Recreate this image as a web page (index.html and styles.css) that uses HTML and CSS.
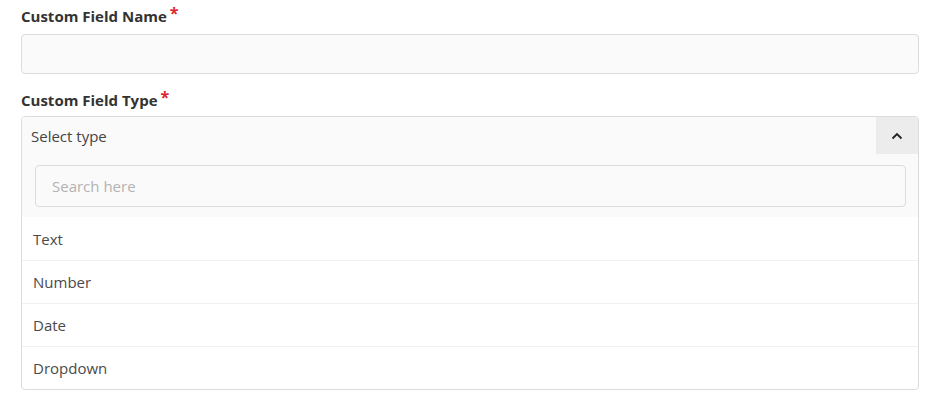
FILE: index.html
```html
<!DOCTYPE html>
<html>
<head>
<meta charset="utf-8">
<link rel="stylesheet" href="styles.css">
</head>
<body>
<div class="form">
  <div class="field">
    <label class="field-label">Custom Field Name<span class="req">*</span></label>
    <input class="text-input" type="text">
  </div>
  <div class="field field-second">
    <label class="field-label">Custom Field Type<span class="req">*</span></label>
    <div class="select">
      <div class="select-head">
        <div class="select-value">Select type</div>
        <div class="select-toggle">
          <svg width="12" height="8" viewBox="0 0 12 8"><path d="M1.5 6.5 L6 2 L10.5 6.5" fill="none" stroke="#222" stroke-width="1.8"/></svg>
        </div>
      </div>
      <div class="search-panel">
        <input class="search-input" type="text" placeholder="Search here">
      </div>
      <div class="options">
        <div class="option">Text</div>
        <div class="option">Number</div>
        <div class="option">Date</div>
        <div class="option">Dropdown</div>
      </div>
    </div>
  </div>
</div>
</body>
</html>
```
FILE: styles.css
```css
html, body {
  margin: 0;
  padding: 0;
  background: #fff;
  font-family: "Open Sans", "Liberation Sans", sans-serif;
}
.form {
  padding: 6px 13px 0 21px;
}
.field {
  display: flex;
  flex-direction: column;
}
.field-second {
  margin-top: 16px;
}
.field-label {
  font-size: 15px;
  font-weight: 700;
  color: #333;
  line-height: 20px;
  margin-bottom: 8px;
}
.field-second .field-label {
  margin-bottom: 6px;
}
.req {
  color: #e0242f;
  font-size: 16px;
  position: relative;
  top: -3px;
  margin-left: 3px;
}
.text-input {
  box-sizing: border-box;
  height: 40px;
  width: 100%;
  border: 1px solid #dcdcdc;
  border-radius: 4px;
  background: #fafafa;
  margin: 0;
  outline: none;
}
.select {
  border: 1px solid #dcdcdc;
  border-radius: 4px;
  overflow: hidden;
  background: #fff;
}
.select-head {
  display: flex;
  height: 37px;
  background: #fafafa;
}
.select-value {
  flex: 1;
  display: flex;
  align-items: center;
  padding-left: 9px;
  font-size: 15px;
  color: #444;
}
.select-toggle {
  width: 42px;
  background: #ececec;
  display: flex;
  align-items: center;
  justify-content: center;
}
.search-panel {
  background: #fafafa;
  padding: 11px 12px 10px 13px;
}
.search-input {
  box-sizing: border-box;
  width: 100%;
  height: 42px;
  border: 1px solid #dcdcdc;
  border-radius: 4px;
  background: #fafafa;
  padding: 0 16px;
  font-family: inherit;
  font-size: 15px;
  margin: 0;
  outline: none;
  display: block;
}
.search-input::placeholder {
  color: #b3b3b3;
}
.option {
  height: 43px;
  box-sizing: border-box;
  display: flex;
  align-items: center;
  padding-left: 11px;
  font-size: 15px;
  color: #4a4a4a;
  border-top: 1px solid #f0f0f0;
}
.option:first-child {
  border-top: none;
}
```
